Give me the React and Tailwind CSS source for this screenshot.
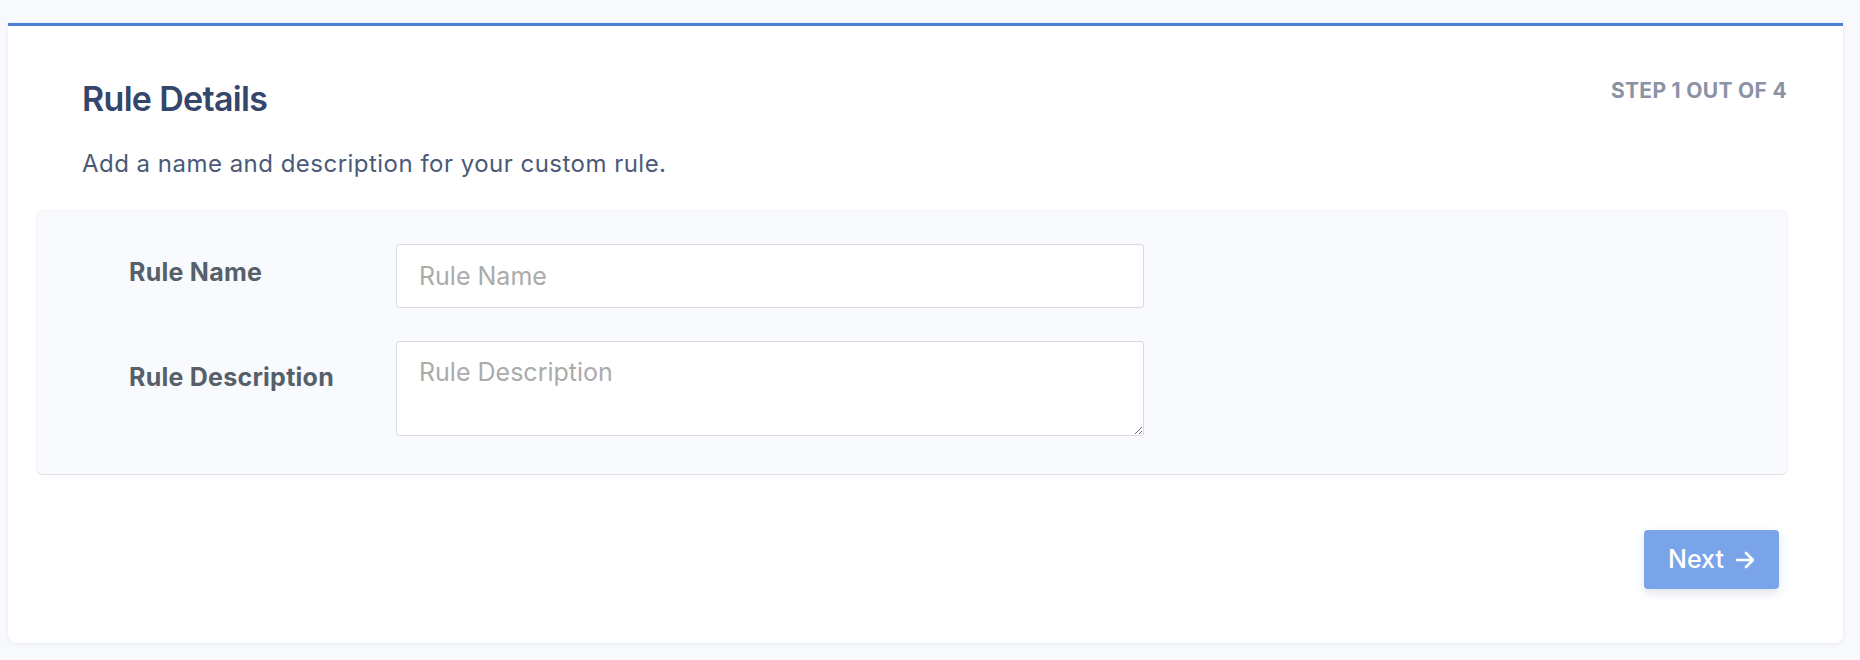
import React from "react";

export default function App() {
  return (
    <div
      className="min-h-[660px] bg-[#f7f9fc] pt-[23px] pl-[8px] pr-[17px] pb-[17px]"
      style={{ fontFamily: "Inter, 'Noto Sans', sans-serif" }}
    >
      <div className="bg-white border-t-[3px] border-[#4b80d5] rounded-b-lg shadow-[0_1px_4px_rgba(30,50,100,0.08)] h-[620px] flex flex-col">
        <div className="pt-[48px] pl-[74px] pr-[56px] flex justify-between items-start">
          <h1 className="mt-[4px] text-[34px] leading-[42px] font-semibold text-[#34466b] tracking-[-0.02em]">
            Rule Details
          </h1>
          <div className="mt-[1px] text-[21px] leading-[32px] font-bold text-[#8a92a3] uppercase tracking-[0.015em]">
            Step 1 out of 4
          </div>
        </div>
        <p className="mt-[26px] pl-[74px] text-[24px] leading-[36px] text-[#4b5a78] tracking-[0.02em]">
          Add a name and description for your custom rule.
        </p>
        <div className="mt-[28px] ml-[28px] mr-[55px] bg-[#f8fafd] rounded-md border border-[#f0f2f6] border-b-[#dfe3e9] pt-[33px] pb-[38px] pl-[92px] flex flex-col gap-[33px]">
          <div className="flex items-start">
            <label className="w-[267px] shrink-0 pt-[10px] text-[25px] leading-[36px] font-bold text-[#56606a] tracking-[0.01em]">
              Rule Name
            </label>
            <input
              type="text"
              placeholder="Rule Name"
              className="w-[748px] h-[64px] bg-white border border-[#d8dce2] rounded-[3px] px-[22px] text-[25px] text-[#333] placeholder:text-[#ababab] outline-none"
            />
          </div>
          <div className="flex items-start">
            <label className="w-[267px] shrink-0 pt-[18px] text-[25px] leading-[36px] font-bold text-[#56606a] tracking-[0.01em]">
              Rule Description
            </label>
            <textarea
              placeholder="Rule Description"
              className="w-[748px] h-[95px] bg-white border border-[#d8dce2] rounded-[3px] px-[22px] pt-[12px] text-[25px] leading-[36px] text-[#333] placeholder:text-[#ababab] outline-none"
            />
          </div>
        </div>
        <div className="mt-[55px] pr-[64px] flex justify-end">
          <button className="w-[135px] h-[59px] bg-[#79a4ea] rounded-[4px] shadow-[0_4px_10px_rgba(40,70,130,0.15)] text-white text-[25px] font-medium flex items-center justify-center gap-[11px]">
            <span>Next</span>
            <svg width="20" height="18" viewBox="0 0 20 18" fill="none" stroke="white" strokeWidth="2.6" strokeLinecap="round" strokeLinejoin="round">
              <path d="M2 9H18M11 2L18 9L11 16" />
            </svg>
          </button>
        </div>
      </div>
    </div>
  );
}
